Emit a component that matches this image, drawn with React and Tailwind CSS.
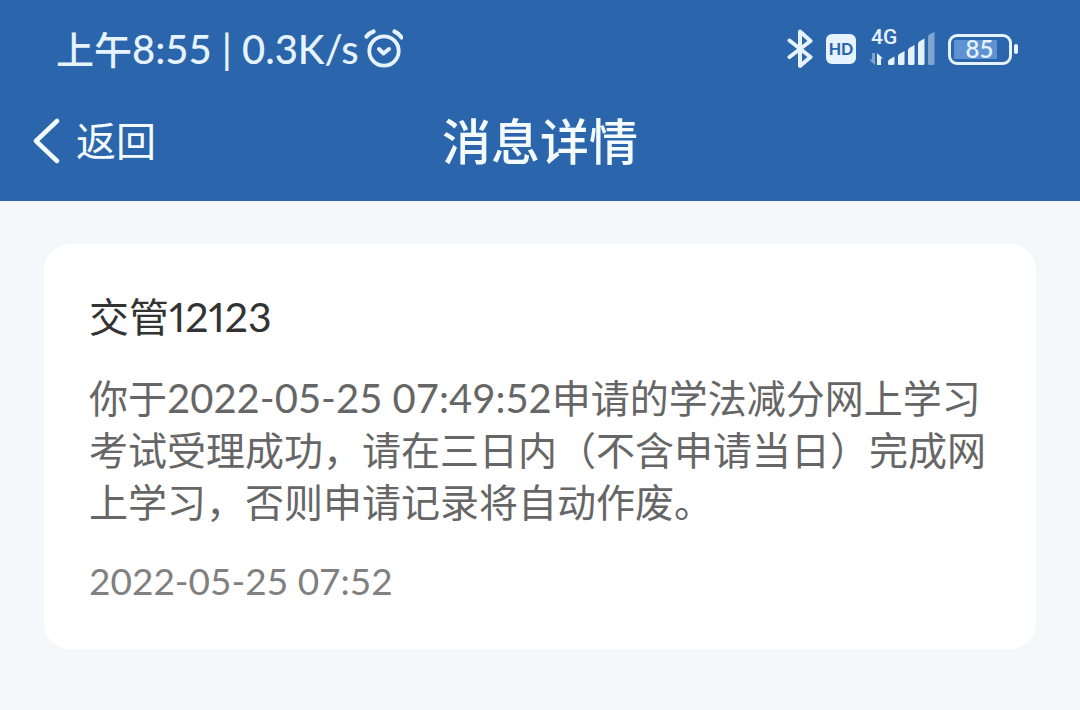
function AlarmIcon() {
    return (
        <svg className="w-10 h-10 shrink-0" viewBox="0 0 40 40" fill="none" stroke="currentColor" strokeLinecap="round" strokeLinejoin="round">
            <circle cx="21" cy="22" r="14.7" strokeWidth="3.8" />
            <path d="M16 20 L20.5 24.5 L26 20" strokeWidth="4" />
            <path d="M3.5 7.5 Q6 4 10.5 2.5 M31.5 2.5 Q36 4.5 38.5 8.5" strokeWidth="4.2" />
        </svg>
    );
}

function BluetoothIcon() {
    return (
        <svg className="w-[26px] h-10" viewBox="0 0 26 40" fill="none" stroke="currentColor" strokeWidth="4" strokeLinecap="round" strokeLinejoin="round">
            <path d="M2.5 11.5 L23.5 28 L13 37 V2.5 L23.5 12 L2.5 28" />
        </svg>
    );
}

function SignalIcon() {
    return (
        <svg className="w-[66px] h-10" viewBox="0 0 66 40" fill="currentColor">
            <g opacity="0.45">
                <path d="M3 24 H6 V36 L0 30.5 H3 z" />
                <path d="M59 8 Q59 6 61 5 L65.5 3 V34.5 Q65.5 36 64 36 H60.5 Q59 36 59 34.5 z" />
            </g>
            <path d="M8 24 L14 29.5 H12 V36 H8 z" />
            <path d="M19 33 Q19 31 21 30 L25.5 27.5 V34.5 Q25.5 36 24 36 H20.5 Q19 36 19 34.5 z" />
            <path d="M29 27 Q29 25.5 31 24.5 L35.5 22 V34.5 Q35.5 36 34 36 H30.5 Q29 36 29 34.5 z" />
            <path d="M39 21 Q39 19.5 41 18.5 L45.5 16 V34.5 Q45.5 36 44 36 H40.5 Q39 36 39 34.5 z" />
            <path d="M49 15 Q49 13 51 12 L55.5 9.5 V34.5 Q55.5 36 54 36 H50.5 Q49 36 49 34.5 z" />
        </svg>
    );
}

function StatusBar() {
    return (
        <div className="flex h-[82px] items-center justify-between pt-4 pl-14 pr-[62px] text-[#e6f3ff]">
            <div className="flex items-center gap-1">
                <span className="text-[38px] leading-[52px] font-medium">
                    上午<span className="text-[40px]">8:55 | 0.3K/s</span>
                </span>
                <AlarmIcon />
            </div>
            <div className="flex items-center gap-[13px]">
                <BluetoothIcon />
                <span className="flex h-[30px] w-[30px] items-center justify-center rounded-md bg-[#e6f3ff] text-[16px] font-black text-[#2b65ab]">
                    HD
                </span>
                <div className="relative">
                    <SignalIcon />
                    <span className="absolute left-0.5 -top-1 font-[Roboto,sans-serif] text-[21px] leading-6 font-medium">4G</span>
                </div>
                <div className="flex items-center gap-0.5">
                    <div className="flex h-[31px] w-16 rounded-[9px] border-[3px] border-current p-[3px]">
                        <span className="flex w-[43px] items-center justify-center bg-[#5f92d2] pl-2 text-[24px] font-semibold">
                            85
                        </span>
                    </div>
                    <span className="h-[10px] w-1 rounded-sm bg-current" />
                </div>
            </div>
        </div>
    );
}

function NavBar() {
    return (
        <div className="grid h-[119px] grid-cols-[1fr_auto_1fr] items-center px-8 pb-0.5 text-[#f4fbff]">
            <button type="button" className="flex items-center gap-4 justify-self-start text-[40px] leading-[52px]">
                <svg className="w-7 h-12" viewBox="0 0 28 48" fill="none" stroke="currentColor" strokeWidth="4.5" strokeLinecap="round" strokeLinejoin="round">
                    <path d="M25 4 L4 24 L25 44" />
                </svg>
                返回
            </button>
            <h1 className="text-[49px] leading-[64px] font-medium">消息详情</h1>
        </div>
    );
}

export default function App() {
    return (
        <div className="min-h-screen bg-[#f4f8fa] font-[Lato,'Noto_Sans_CJK_SC',sans-serif]">
            <header className="bg-[#2b65ab]">
                <StatusBar />
                <NavBar />
            </header>
            <main className="px-11 pt-[43px]">
                <article className="flex flex-col gap-[27px] rounded-[26px] bg-white px-[45px] pt-[45px] pb-[42px]">
                    <h2 className="text-[40px] leading-[56px] text-[#333333]">
                        交管<span className="text-[41px] proportional-nums">12123</span>
                    </h2>
                    <p className="text-[39px] leading-[52px] text-[#666666]">
                        你于<span className="text-[40px]">2022-05-25 07:49:52</span>
                        申请的学法减分网上学习考试受理成功，请在三日内（不含申请当日）完成网上学习，否则申请记录将自动作废。
                    </p>
                    <time dateTime="2022-05-25T07:52" className="text-[37px] leading-[52px] text-[#808080]">
                        2022-05-25 07:52
                    </time>
                </article>
            </main>
        </div>
    );
}
